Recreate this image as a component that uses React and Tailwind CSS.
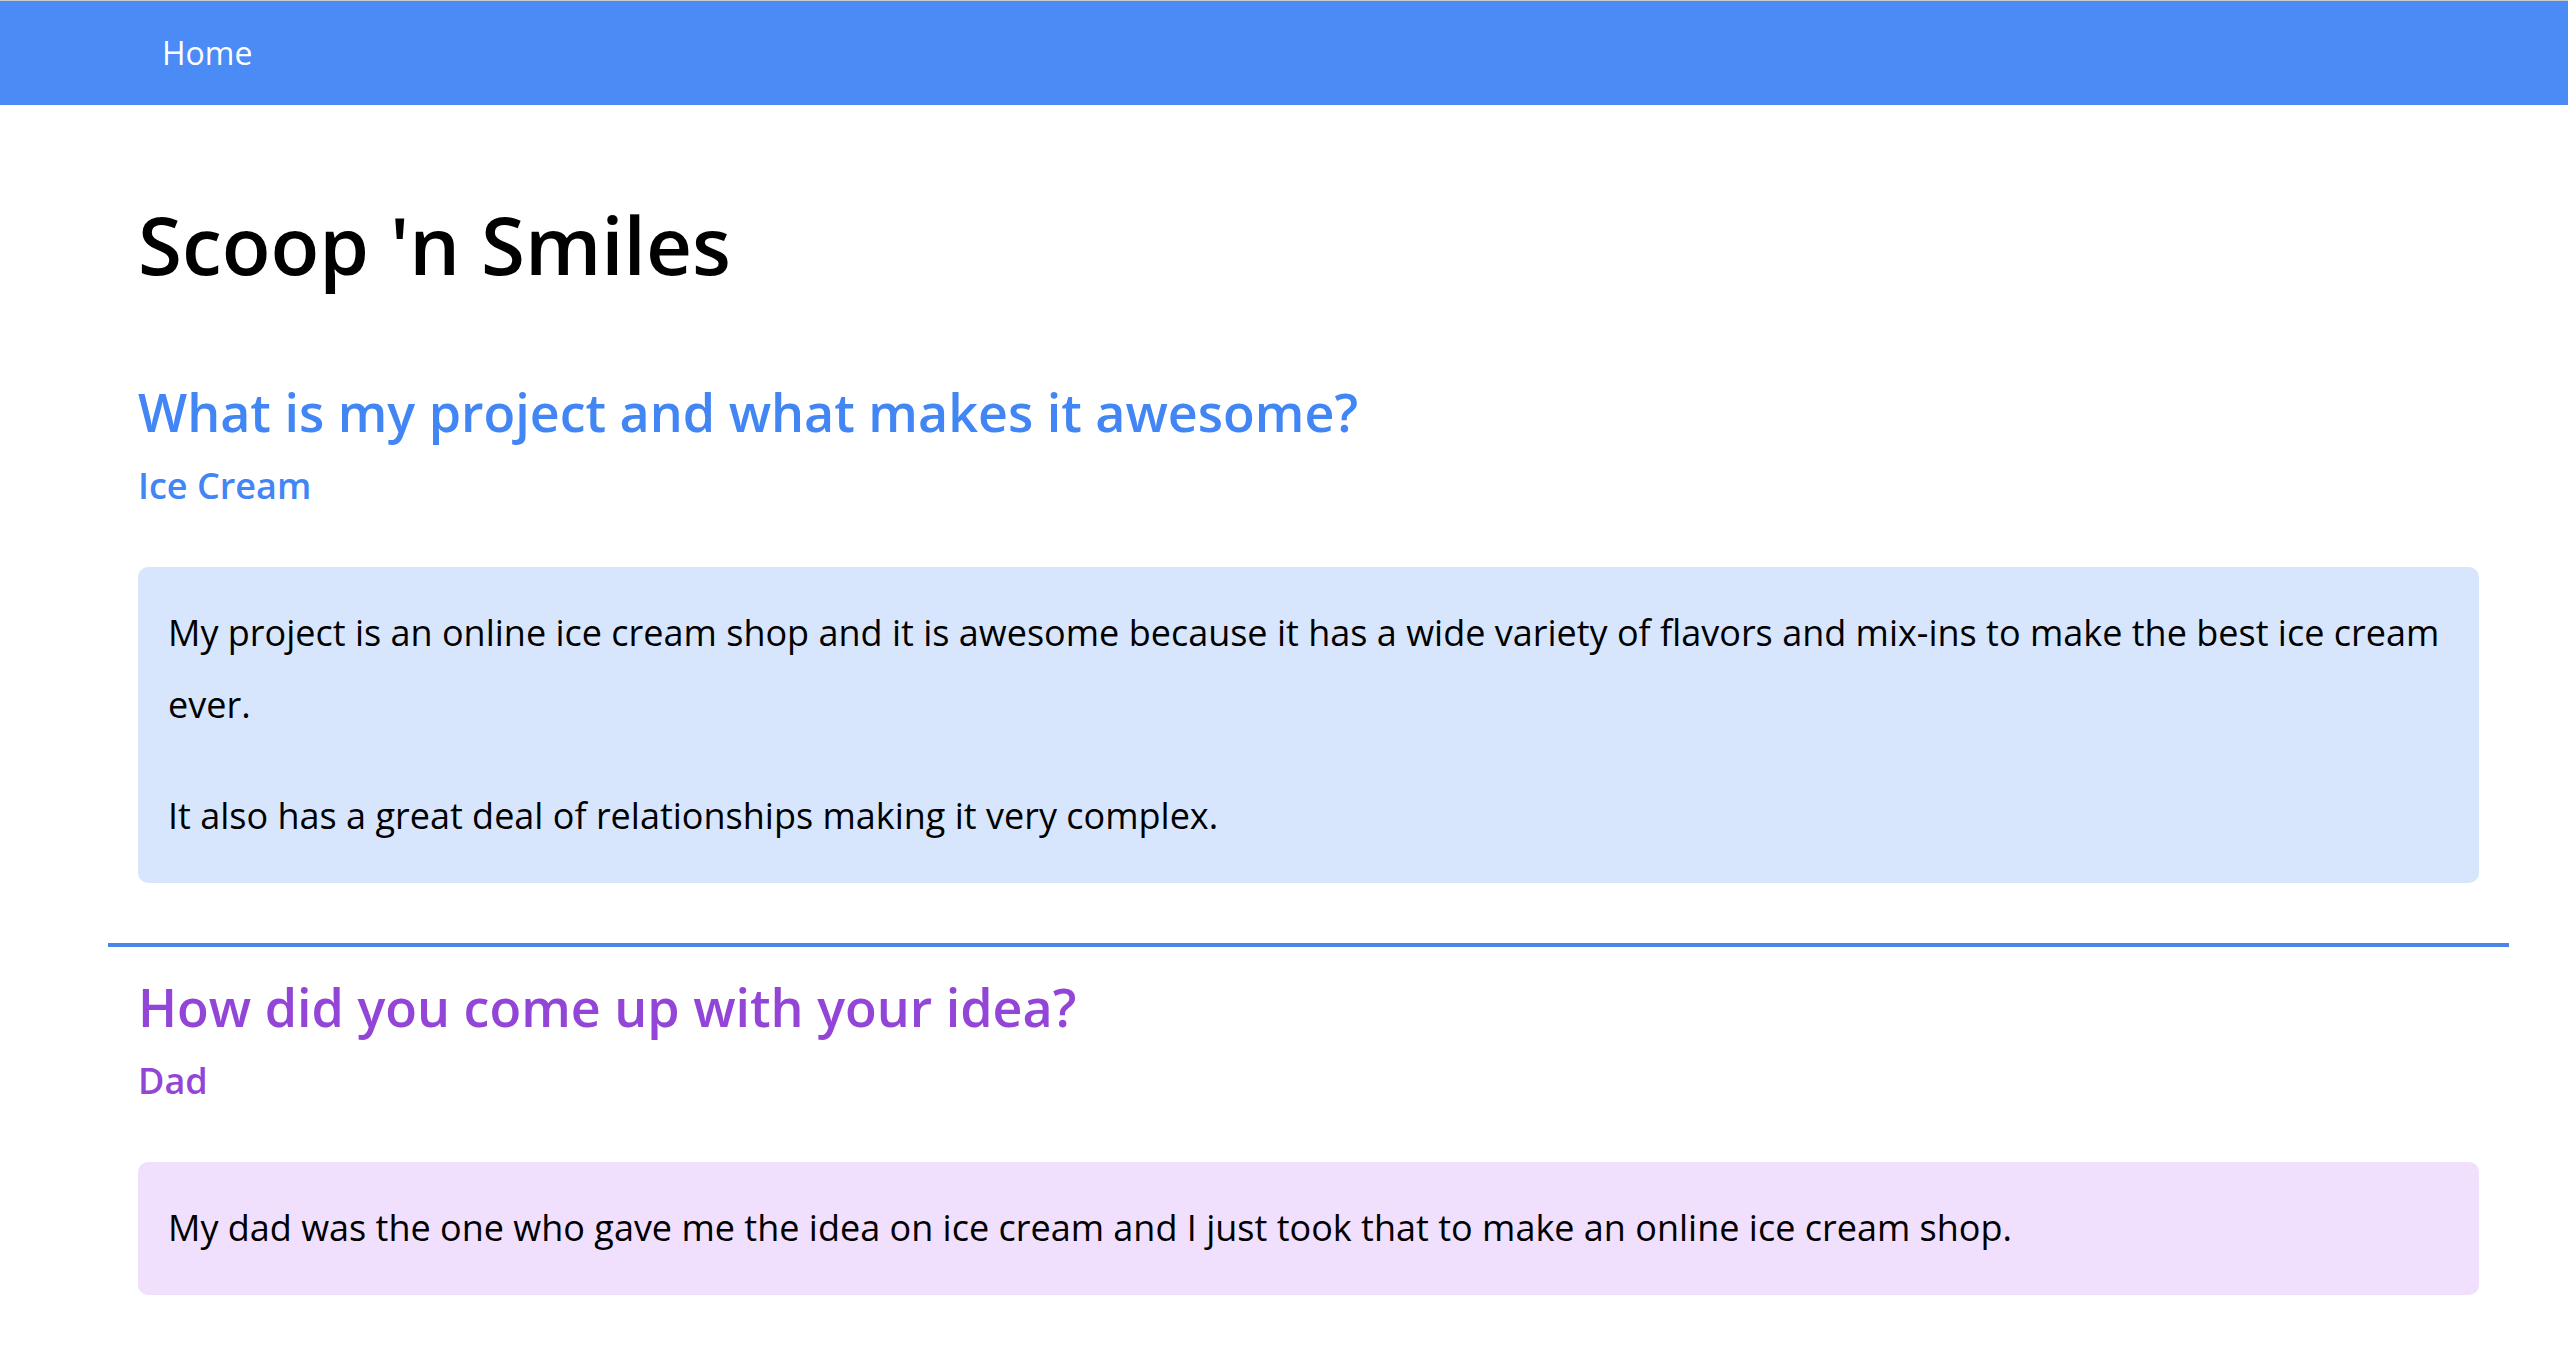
import React from 'react';

const sections = [
  {
    id: 'awesome',
    question: 'What is my project and what makes it awesome?',
    answer: 'Ice Cream',
    heading: 'text-[#4285f4]',
    box: 'bg-[#d8e6fd]',
    paragraphs: [
      'My project is an online ice cream shop and it is awesome because it has a wide variety of flavors and mix-ins to make the best ice cream ever.',
      'It also has a great deal of relationships making it very complex.',
    ],
  },
  {
    id: 'idea',
    question: 'How did you come up with your idea?',
    answer: 'Dad',
    heading: 'text-[#9245d6]',
    box: 'bg-[#f0dffd]',
    paragraphs: [
      'My dad was the one who gave me the idea on ice cream and I just took that to make an online ice cream shop.',
    ],
  },
];

const Section = ({ section }) => (
  <section className="px-[30px]">
    <h2 className={`text-[52px] leading-[68px] font-semibold ${section.heading}`}>
      {section.question}
    </h2>
    <h3 className={`mt-[18px] text-[36px] leading-[44px] font-semibold ${section.heading}`}>
      {section.answer}
    </h3>
    <div className={`mt-[59px] rounded-[10px] pt-[30px] pb-[31px] px-[30px] ${section.box}`}>
      {section.paragraphs.map((p, i) => (
        <p key={i} className={`text-[36px] leading-[72px] text-black ${i > 0 ? 'mt-[39px]' : ''}`}>
          {p}
        </p>
      ))}
    </div>
  </section>
);

export default function App() {
  return (
    <div className="min-h-[1352px] bg-white font-['Open_Sans',sans-serif] border-t border-[#c9c9c9]">
      <nav className="h-[104px] bg-[#4a8bf5] flex items-center pl-[162px]">
        <a className="text-white text-[32px] leading-none">Home</a>
      </nav>

      <main className="ml-[108px] w-[2401px]">
        <h1 className="mt-[91px] px-[30px] text-[80px] leading-[96px] font-semibold text-black">
          Scoop 'n Smiles
        </h1>

        <div className="mt-[86px]">
          <Section section={sections[0]} />
        </div>

        <hr className="mt-[60px] border-0 h-[4px] bg-[#4a86e8]" />

        <div className="mt-[26px]">
          <Section section={sections[1]} />
        </div>
      </main>
    </div>
  );
}
